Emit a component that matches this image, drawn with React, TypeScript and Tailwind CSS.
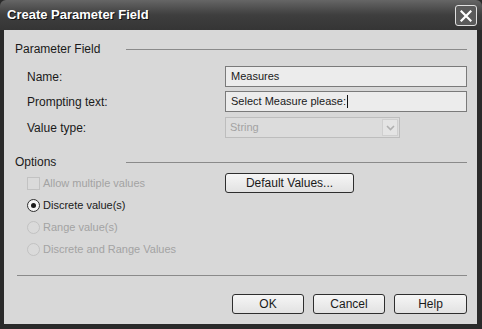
import React from 'react';

const font = { fontFamily: '"Liberation Sans", Arial, sans-serif' };

function SectionHeader({ label }: { label: string }) {
  return (
    <div className="flex items-center h-[14px]">
      <span className="w-[111px] text-[12px] leading-none text-[#1a1a1a]">{label}</span>
      <div className="flex-1 h-px bg-[#8a8a8a]" />
    </div>
  );
}

function Button({ label, className = '' }: { label: string; className?: string }) {
  return (
    <div
      className={`h-[20px] flex items-center justify-center rounded-[3px] border border-[#2e2e2e] bg-gradient-to-b from-[#f6f6f6] to-[#e2e2e2] text-[12px] text-[#1a1a1a] ${className}`}
    >
      {label}
    </div>
  );
}

function Radio({ checked, disabled, label }: { checked?: boolean; disabled?: boolean; label: string }) {
  return (
    <div className="flex items-center h-[21px] gap-[3px]">
      <div
        className={`w-[13px] h-[13px] rounded-full border flex items-center justify-center ${
          disabled ? 'border-[#c2c2c2] bg-[#dadada]' : 'border-[#2e2e2e] bg-[#f4f4f4]'
        }`}
      >
        {checked && <div className="w-[5px] h-[5px] rounded-full bg-[#1a1a1a]" />}
      </div>
      <span className={`text-[11px] ${disabled ? 'text-[#a3a3a3]' : 'text-[#1a1a1a]'}`}>{label}</span>
    </div>
  );
}

export default function App() {
  return (
    <div className="w-[482px] h-[329px] bg-[#2a2a2a] flex flex-col" style={font}>
      {/* Title bar */}
      <div className="h-[30px] flex items-center justify-between pl-[7px] pr-[5px] rounded-t-[6px] bg-gradient-to-b from-[#666] via-[#3e3e3e] to-[#353535]">
        <span className="text-[13px] font-bold text-white [text-shadow:1px_1px_0_#111]">Create Parameter Field</span>
        <div className="w-[22px] h-[21px] mt-[1px] rounded-[3px] border border-[#e0e0e0] bg-[#5a5a5a] flex items-center justify-center">
          <svg width="12" height="12" viewBox="0 0 12 12">
            <path d="M1.5 1.5 L10.5 10.5 M10.5 1.5 L1.5 10.5" stroke="#fff" strokeWidth="2.2" strokeLinecap="square" />
          </svg>
        </div>
      </div>

      {/* Body */}
      <div className="flex-1 ml-[4px] mr-[5px] mb-[5px] bg-[#d8d8d8] flex flex-col pl-[11px] pr-[10px] pt-[12px]">
        <SectionHeader label="Parameter Field" />

        <div className="grid grid-cols-[198px_1fr] items-center mt-[10px] pl-[12px] gap-y-[4px] text-[12px] text-[#1a1a1a]">
          <span>Name:</span>
          <div className="h-[21px] border border-[#7a7a7a] bg-[#ececec] flex items-center pl-[5px] text-[11px]">Measures</div>
          <span>Prompting text:</span>
          <div className="h-[21px] border border-[#7a7a7a] bg-[#ececec] flex items-center pl-[5px] text-[11px]">
            Select Measure please:<span className="w-px h-[13px] bg-[#111] ml-px" />
          </div>
          <span className="mt-[1px]">Value type:</span>
          <div className="mt-[1px] w-[175px] h-[21px] border border-[#bdbdbd] bg-[#dcdcdc] flex items-center">
            <span className="flex-1 pl-[4px] text-[11px] text-[#a3a3a3]">String</span>
            <div className="w-[16px] h-[17px] mr-[1px] bg-[#e4e4e4] border border-[#cfcfcf] flex items-center justify-center">
              <svg width="9" height="6" viewBox="0 0 9 6">
                <path d="M1 1 L4.5 4.5 L8 1" stroke="#b0b0b0" strokeWidth="1.6" fill="none" />
              </svg>
            </div>
          </div>
        </div>

        <div className="mt-[17px]">
          <SectionHeader label="Options" />
        </div>

        <div className="flex mt-[4px]">
          <div className="w-[210px] pl-[12px] flex flex-col gap-px">
            <div className="flex items-center h-[21px] gap-[3px]">
              <div className="w-[13px] h-[13px] border border-[#c2c2c2] bg-[#dadada]" />
              <span className="text-[11px] text-[#a3a3a3]">Allow multiple values</span>
            </div>
            <Radio checked label="Discrete value(s)" />
            <Radio disabled label="Range value(s)" />
            <Radio disabled label="Discrete and Range Values" />
          </div>
          <Button label="Default Values..." className="w-[129px] text-[11px]" />
        </div>

        <div className="mt-[15px] h-px bg-[#8a8a8a] ml-[2px]" />

        <div className="flex justify-end gap-[9px] mt-[18px]">
          <Button label="OK" className="w-[72px]" />
          <Button label="Cancel" className="w-[72px]" />
          <Button label="Help" className="w-[73px]" />
        </div>
      </div>
    </div>
  );
}
